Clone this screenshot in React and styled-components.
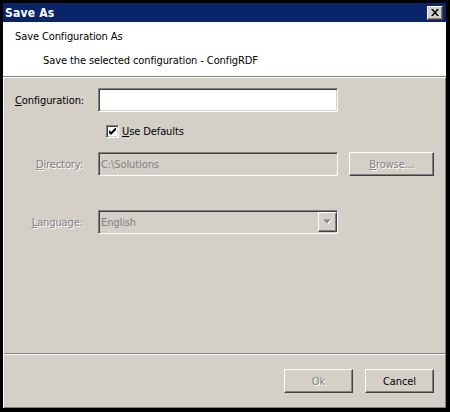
import React from "react";
import styled, { createGlobalStyle } from "styled-components";

const uiFont = `"DejaVu Sans Condensed", "Liberation Sans", sans-serif`;

const GlobalStyle = createGlobalStyle`
  html, body {
    margin: 0;
    padding: 0;
    background: #000;
  }
  * {
    box-sizing: border-box;
  }
`;

const raised = `
  border: 1px solid;
  border-color: #fff #404040 #404040 #fff;
  box-shadow: inset -1px -1px #808080, inset 1px 1px #d4d0c8;
  background: #d4d0c8;
`;

const sunken = `
  border: 1px solid;
  border-color: #808080 #fff #fff #808080;
  box-shadow: inset 1px 1px #404040, inset -1px -1px #d4d0c8;
`;

const Frame = styled.div`
  width: 450px;
  height: 412px;
  border-style: solid;
  border-color: #000;
  border-width: 3px 4px 4px 3px;
  display: flex;
  flex-direction: column;
  font-family: ${uiFont};
  font-size: 11px;
  letter-spacing: -0.1px;
  color: #000;
`;

const TitleBar = styled.div`
  height: 19px;
  background: #0a246a;
  display: flex;
  align-items: center;
  justify-content: space-between;
  padding: 0 3px 0 2px;
`;

const Title = styled.span`
  color: #fff;
  font-weight: bold;
  font-size: 12px;
  letter-spacing: 0.2px;
`;

const CloseButton = styled.button`
  ${raised}
  width: 16px;
  height: 14px;
  padding: 0;
  display: flex;
  align-items: center;
  justify-content: center;
`;

const Header = styled.div`
  height: 55px;
  background: #fff;
  border-bottom: 1px solid #808080;
  box-shadow: 0 1px #fff;
  display: flex;
  flex-direction: column;
  padding-left: 12px;
`;

const Heading = styled.div`
  height: 12px;
  margin-top: ${(p) => p.top}px;
  padding-left: ${(p) => p.indent || 0}px;
  line-height: 12px;
`;

const Body = styled.div`
  flex: 1;
  background: #d4d0c8;
  margin-top: 1px;
  box-shadow: inset 1px 0 #fff, inset -1px -1px #808080;
  display: flex;
  flex-direction: column;
`;

const Form = styled.div`
  flex: 1;
  padding: 10px 0 0 12px;
  display: flex;
  flex-direction: column;
`;

const Row = styled.div`
  display: flex;
  align-items: center;
  height: 24px;
  margin-top: ${(p) => p.gap || 0}px;
`;

const Label = styled.span`
  width: 68px;
  text-align: right;
  margin-right: 15px;
  white-space: nowrap;
  color: ${(p) => (p.disabled ? "#808080" : "#000")};
  text-shadow: ${(p) => (p.disabled ? "1px 1px #fff" : "none")};
`;

const Field = styled.div`
  ${sunken}
  width: 240px;
  height: 24px;
  background: ${(p) => (p.disabled ? "#d4d0c8" : "#fff")};
  color: #808080;
  display: flex;
  align-items: center;
  padding-left: 2px;
  white-space: nowrap;
`;

const FieldText = styled.span`
  flex: 1;
`;

const DropButton = styled.div`
  ${raised}
  width: 19px;
  height: 20px;
  display: flex;
  align-items: center;
  justify-content: center;
`;

const CheckRow = styled.label`
  display: flex;
  align-items: center;
  height: 23px;
  margin-top: 8px;
  padding-left: 91px;
`;

const CheckBox = styled.span`
  ${sunken}
  width: 13px;
  height: 13px;
  background: #fff;
  display: flex;
  align-items: center;
  justify-content: center;
  margin-right: 3px;
`;

const PushButton = styled.button`
  ${raised}
  width: ${(p) => p.width}px;
  height: 24px;
  padding: 0;
  font-family: ${uiFont};
  font-size: 11px;
  letter-spacing: -0.1px;
  color: ${(p) => (p.disabled ? "#808080" : "#000")};
  text-shadow: ${(p) => (p.disabled ? "1px 1px #fff" : "none")};
  margin-left: ${(p) => p.gap || 0}px;
`;

const Separator = styled.div`
  height: 2px;
  margin: 0 1px 0 1px;
  border-top: 1px solid #808080;
  border-bottom: 1px solid #fff;
`;

const Footer = styled.div`
  display: flex;
  justify-content: flex-end;
  gap: 12px;
  padding: 14px 12px 15px 0;
`;

const Key = styled.span`
  text-decoration: underline;
`;

const CloseGlyph = () => (
  <svg width="8" height="7" viewBox="0 0 8 7">
    <path d="M0 0h2l2 2.5L6 0h2L5 3.5 8 7H6L4 4.5 2 7H0l3-3.5z" fill="#000" />
  </svg>
);

const CheckGlyph = () => (
  <svg width="7" height="7" viewBox="0 0 7 7">
    <path d="M0 2v3l2 2 5-5V-1L2 4z" fill="#000" />
  </svg>
);

const ArrowGlyph = () => (
  <svg width="9" height="6" viewBox="0 0 9 6">
    <path d="M1.5 1.5h7l-3.5 4z" fill="#fff" />
    <path d="M0.5 0.5h7L4 4.5z" fill="#808080" />
  </svg>
);

export default function App() {
  return (
    <>
      <GlobalStyle />
      <Frame>
        <TitleBar>
          <Title>Save As</Title>
          <CloseButton>
            <CloseGlyph />
          </CloseButton>
        </TitleBar>
        <Header>
          <Heading top={9}>Save Configuration As</Heading>
          <Heading top={12} indent={28}>
            Save the selected configuration - ConfigRDF
          </Heading>
        </Header>
        <Body>
          <Form>
            <Row>
              <Label>
                <Key>C</Key>onfiguration:
              </Label>
              <Field />
            </Row>
            <CheckRow>
              <CheckBox>
                <CheckGlyph />
              </CheckBox>
              <span>
                <Key>U</Key>se Defaults
              </span>
            </CheckRow>
            <Row gap={9}>
              <Label disabled>
                <Key>D</Key>irectory:
              </Label>
              <Field disabled>
                <FieldText>C:\Solutions</FieldText>
              </Field>
              <PushButton disabled width={85} gap={11}>
                <Key>B</Key>rowse...
              </PushButton>
            </Row>
            <Row gap={34}>
              <Label disabled>
                <Key>L</Key>anguage:
              </Label>
              <Field disabled>
                <FieldText>English</FieldText>
                <DropButton>
                  <ArrowGlyph />
                </DropButton>
              </Field>
            </Row>
          </Form>
          <Separator />
          <Footer>
            <PushButton disabled width={69}>
              Ok
            </PushButton>
            <PushButton width={69}>Cancel</PushButton>
          </Footer>
        </Body>
      </Frame>
    </>
  );
}
